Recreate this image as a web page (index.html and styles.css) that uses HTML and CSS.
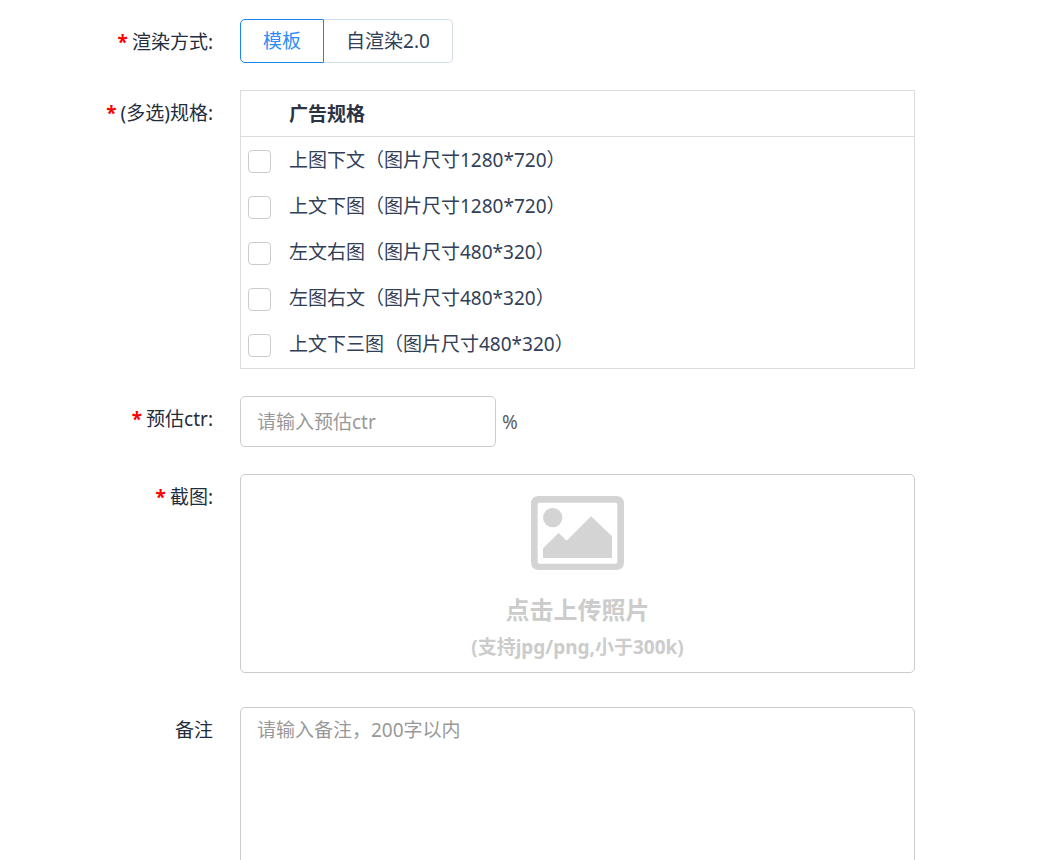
FILE: index.html
```html
<!DOCTYPE html>
<html lang="zh-CN">
<head>
<meta charset="utf-8">
<meta name="viewport" content="width=device-width, initial-scale=1">
<title>广告规格</title>
<link rel="stylesheet" href="styles.css">
</head>
<body>
<form class="form">
  <div class="form-row">
    <span class="form-label required" id="render-label">渲染方式:</span>
    <div class="button-group" role="group" aria-labelledby="render-label">
      <button type="button" class="option option-active" aria-pressed="true">模板</button>
      <button type="button" class="option" aria-pressed="false">自渲染2.0</button>
    </div>
  </div>
  <div class="form-row">
    <span class="form-label required" id="spec-label">(多选)规格:</span>
    <div class="spec-box">
      <table class="spec-table" aria-labelledby="spec-label">
        <thead>
          <tr><th class="check-cell"></th><th>广告规格</th></tr>
        </thead>
        <tbody>
          <tr><td class="check-cell"><input class="checkbox" type="checkbox" id="spec1"></td><td><label for="spec1">上图下文（图片尺寸1280*720）</label></td></tr>
          <tr><td class="check-cell"><input class="checkbox" type="checkbox" id="spec2"></td><td><label for="spec2">上文下图（图片尺寸1280*720）</label></td></tr>
          <tr><td class="check-cell"><input class="checkbox" type="checkbox" id="spec3"></td><td><label for="spec3">左文右图（图片尺寸480*320）</label></td></tr>
          <tr><td class="check-cell"><input class="checkbox" type="checkbox" id="spec4"></td><td><label for="spec4">左图右文（图片尺寸480*320）</label></td></tr>
          <tr><td class="check-cell"><input class="checkbox" type="checkbox" id="spec5"></td><td><label for="spec5">上文下三图（图片尺寸480*320）</label></td></tr>
        </tbody>
      </table>
    </div>
  </div>
  <div class="form-row">
    <label class="form-label required" for="ctr">预估ctr:</label>
    <div class="ctr-field">
      <input class="text-input" id="ctr" type="text" placeholder="请输入预估ctr">
      <span class="unit">%</span>
    </div>
  </div>
  <div class="form-row">
    <span class="form-label required" id="shot-label">截图:</span>
    <button type="button" class="upload">
      <svg class="upload-icon" viewBox="0 0 279 222" aria-hidden="true">
        <path fill-rule="evenodd" d="M24 0H255Q279 0 279 24V198Q279 222 255 222H24Q0 222 0 198V24Q0 0 24 0ZM26 20Q20 20 20 26V197Q20 203 26 203H253Q259 203 259 197V26Q259 20 253 20Z"/>
        <circle cx="65" cy="65" r="29"/>
        <path d="M36 157L83 111L107 134L180 61L243 121V186H36Z"/>
      </svg>
      <span class="upload-title">点击上传照片</span>
      <span class="upload-hint">(支持jpg/png,小于300k)</span>
    </button>
  </div>
  <div class="form-row form-row-note">
    <label class="form-label" for="note">备注</label>
    <textarea class="note" id="note" placeholder="请输入备注，200字以内"></textarea>
  </div>
</form>
</body>
</html>
```
FILE: styles.css
```css
* {
  box-sizing: border-box;
}

body {
  margin: 0;
  background: #fff;
  color: #1f2d3d;
  font-family: "Noto Sans", "Noto Sans CJK SC", sans-serif;
  font-size: 19px;
  line-height: 46px;
}

button,
input,
textarea {
  margin: 0;
  font: inherit;
}

.form {
  display: flex;
  flex-direction: column;
  gap: 27px;
  padding: 19px 134px 27px 0;
}

.form-row {
  display: grid;
  grid-template-columns: 213px minmax(0, 1fr);
  column-gap: 27px;
  align-items: start;
}

.form-row-note {
  padding-top: 7px;
}

.form-label {
  height: 44px;
  text-align: right;
  white-space: nowrap;
}

.required::before {
  content: "*";
  margin-right: 4px;
  color: #f00;
  font-weight: 700;
}

.button-group {
  display: flex;
}

.option {
  height: 44px;
  padding: 0 22px;
  border: 1px solid #d3dce6;
  border-left: 0;
  border-radius: 0 5px 5px 0;
  background: #fff;
  color: #324057;
  line-height: 42px;
}

.option-active {
  border: 1px solid #1c86ee;
  border-radius: 5px 0 0 5px;
  color: #2f8df5;
}

.spec-box {
  padding-bottom: 1px;
  border: 1px solid #dcdcdc;
}

.spec-table {
  width: 100%;
  border-collapse: separate;
  border-spacing: 0;
  table-layout: fixed;
  color: #324057;
}

.spec-table th,
.spec-table td {
  height: 46px;
  padding: 0;
  line-height: 44px;
  text-align: left;
}

.spec-table th {
  border-bottom: 1px solid #dcdcdc;
  color: #2b3445;
  vertical-align: bottom;
}

.spec-table .check-cell {
  width: 48px;
  padding: 3px 0 0 7px;
  line-height: 0;
  vertical-align: middle;
}

.checkbox {
  width: 23px;
  height: 23px;
  appearance: none;
  border: 1px solid #ccc;
  border-radius: 4px;
  background: #fff;
}

.checkbox:checked {
  background: #1c86ee;
}

.ctr-field {
  display: flex;
  align-items: center;
  gap: 6px;
  color: #5a5e66;
}

.text-input {
  width: 256px;
  height: 51px;
  padding: 0 16px;
  border: 1px solid #ccc;
  border-radius: 5px;
  background: #fff;
}

::placeholder {
  color: #999;
  opacity: 1;
}

.upload {
  display: flex;
  flex-direction: column;
  align-items: center;
  padding: 21px 16px 7px;
  border: 1px solid #ccc;
  border-radius: 5px;
  background: #fff;
  color: #ccc;
  font-weight: 700;
}

.upload-icon {
  width: 93px;
  height: 74px;
  margin-bottom: 20px;
  fill: #d4d4d4;
}

.upload-title {
  font-size: 24px;
  line-height: 40px;
}

.upload-hint {
  line-height: 35px;
}

.note {
  width: 100%;
  height: 200px;
  padding: 0 16px;
  border: 1px solid #ccc;
  border-radius: 5px;
  background: #fff;
  line-height: 44px;
  resize: none;
}
```
